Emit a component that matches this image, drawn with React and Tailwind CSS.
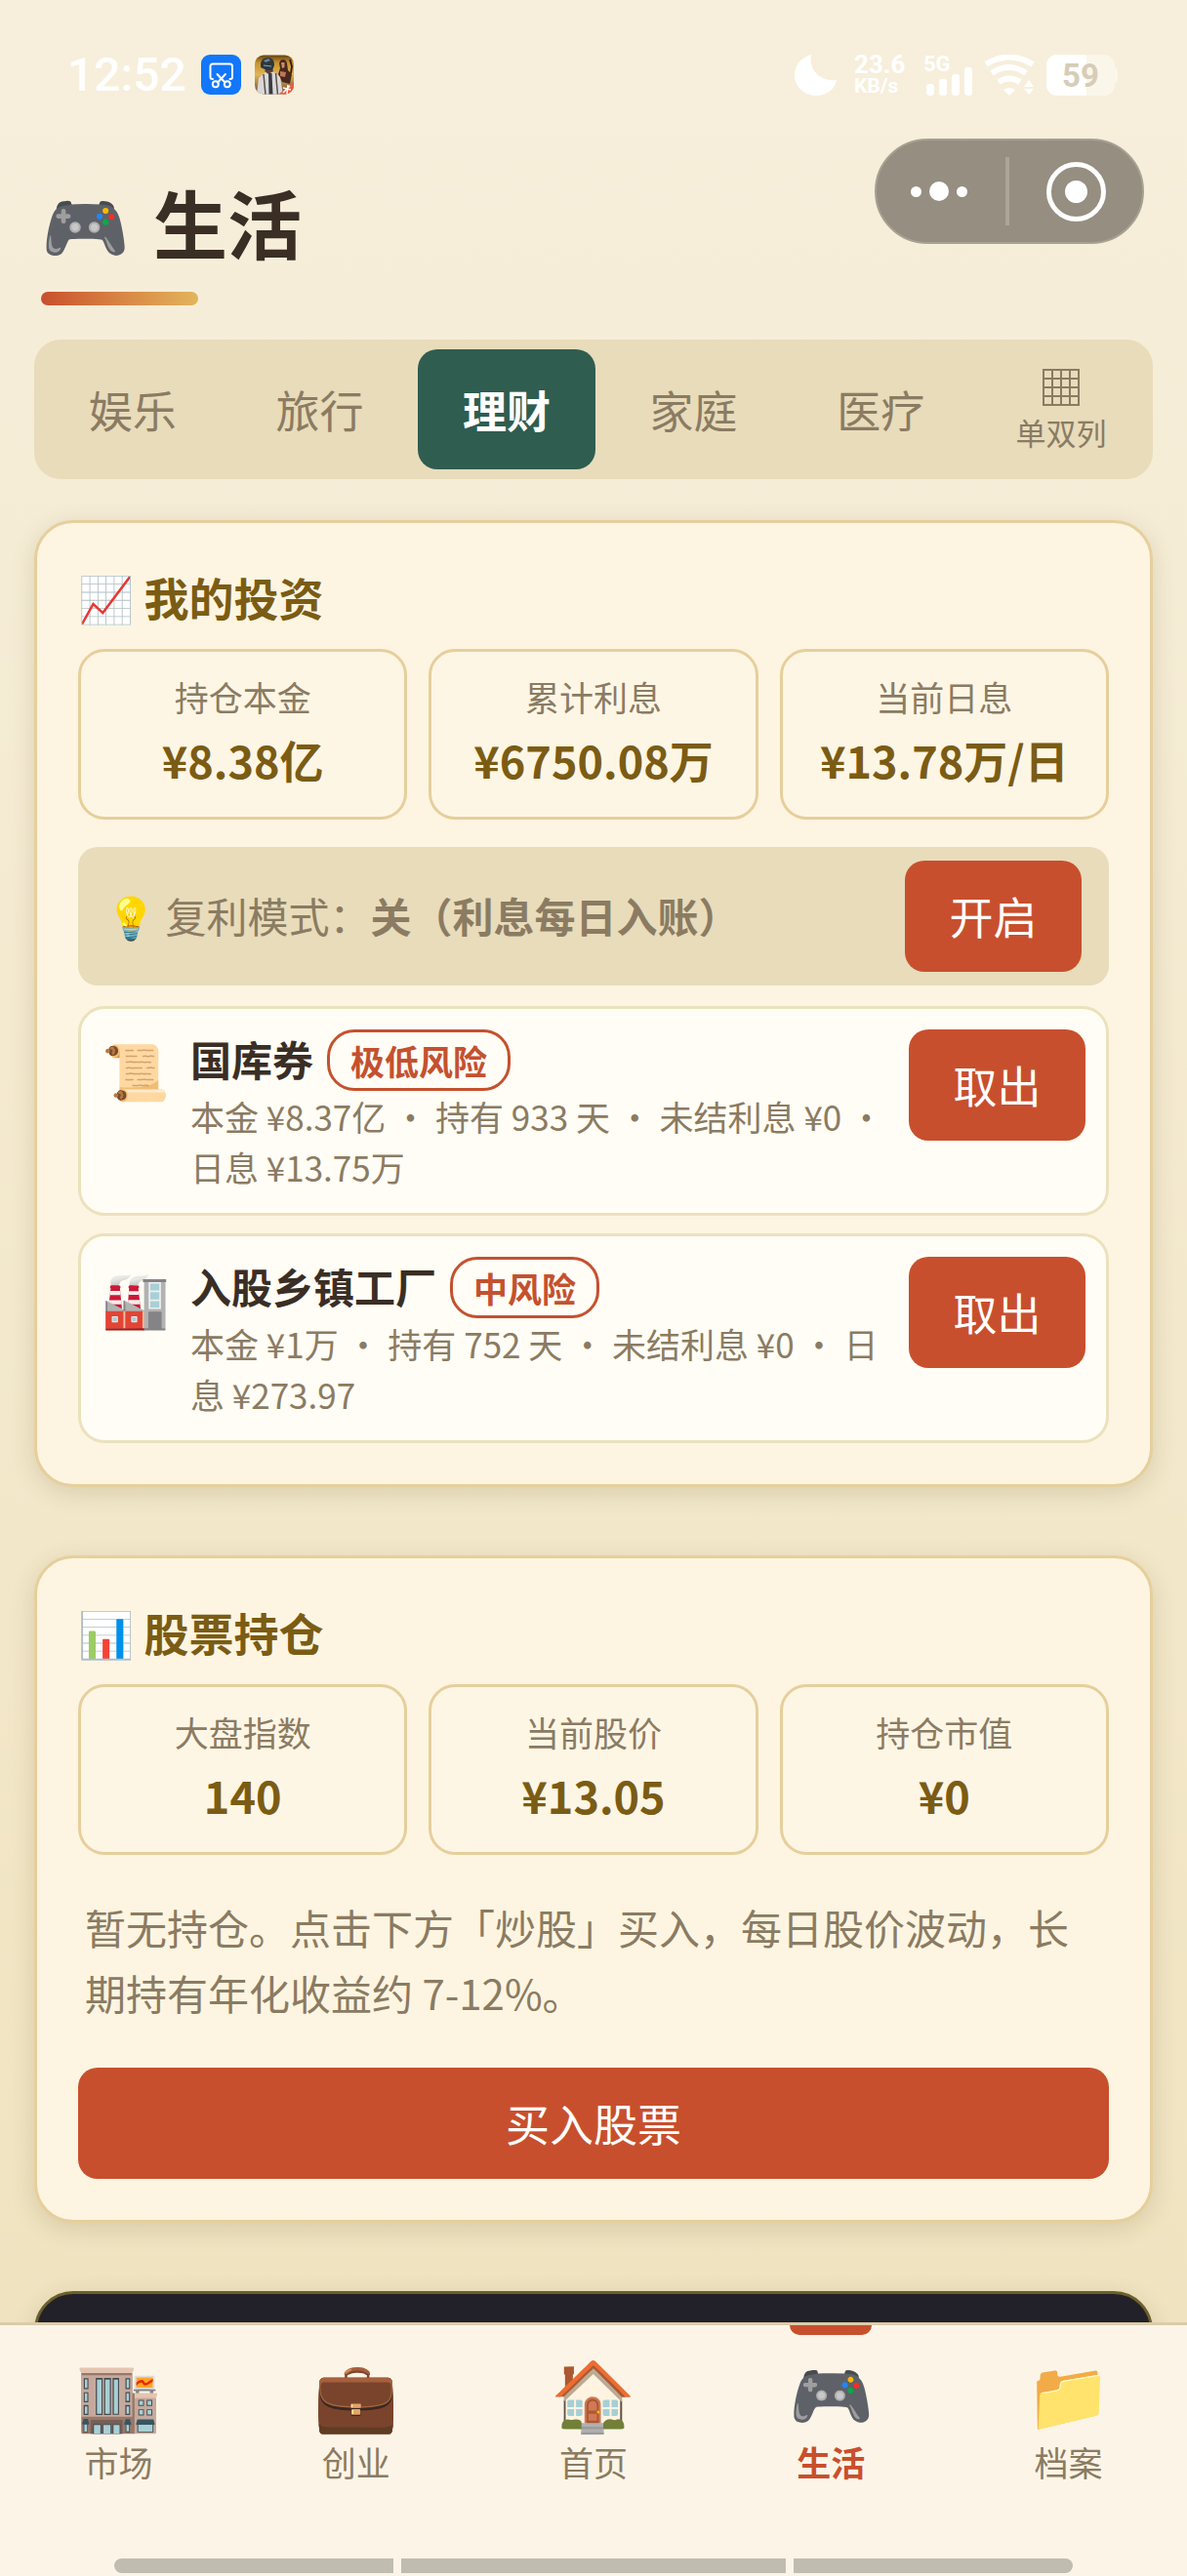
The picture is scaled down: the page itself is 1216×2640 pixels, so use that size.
const tabs = ['娱乐', '旅行', '理财', '家庭', '医疗'];

const investStats = [
  { label: '持仓本金', value: '¥8.38亿' },
  { label: '累计利息', value: '¥6750.08万' },
  { label: '当前日息', value: '¥13.78万/日' },
];

const stockStats = [
  { label: '大盘指数', value: '140' },
  { label: '当前股价', value: '¥13.05' },
  { label: '持仓市值', value: '¥0' },
];

const holdings = [
  {
    icon: '📜',
    name: '国库券',
    risk: '极低风险',
    meta: '本金 ¥8.37亿 · 持有 933 天 · 未结利息 ¥0 · 日息 ¥13.75万',
  },
  {
    icon: '🏭',
    name: '入股乡镇工厂',
    risk: '中风险',
    meta: '本金 ¥1万 · 持有 752 天 · 未结利息 ¥0 · 日息 ¥273.97',
  },
];

const navItems = [
  { icon: '🏬', label: '市场' },
  { icon: '💼', label: '创业' },
  { icon: '🏠', label: '首页' },
  { icon: '🎮', label: '生活', active: true },
  { icon: '📁', label: '档案' },
];

function ScissorsBadge() {
  return (
    <svg className="size-[41px]" viewBox="0 0 41 41" fill="none" aria-hidden>
      <rect width="41" height="41" rx="9" fill="#1277fb" />
      <g stroke="#fff" strokeWidth="2" strokeLinecap="round">
        <path d="M12 25h-.5a2 2 0 0 1-2-2V12a2.500 2.500 0 0 1 2.500-2.500h17.500A2.500 2.500 0 0 1 32 12v11a2 2 0 0 1-2 2h-.500" />
        <path d="M16.500 20l8 8.500M25 20l-8 8.500" />
        <circle cx="14.800" cy="30.300" r="3" />
        <circle cx="26.800" cy="30.300" r="3" />
      </g>
    </svg>
  );
}

function GameBadge() {
  return (
    <svg className="size-[41px]" viewBox="0 0 41 41" aria-hidden>
      <defs>
        <clipPath id="game-clip">
          <rect width="40" height="40" y="0.500" rx="9" />
        </clipPath>
        <linearGradient id="game-bg" x1="0" y1="0" x2="0" y2="1">
          <stop offset="0" stopColor="#5b3c14" />
          <stop offset="0.200" stopColor="#c8922c" />
          <stop offset="0.500" stopColor="#e0b457" />
          <stop offset="1" stopColor="#6a4a35" />
        </linearGradient>
      </defs>
      <g clipPath="url(#game-clip)">
        <rect width="41" height="41" fill="url(#game-bg)" />
        <path d="M25 9q1-4 4-4t4 4l1 7 4 4-2 10-8-2-4-8 2-6z" fill="#4a281d" />
        <path d="M27 8h3.500v5l-2.500 1z" fill="#c98e68" />
        <path d="M26 17l6 1-1 5-5-1z" fill="#b97a58" />
        <path d="M36 5l2 7-1 7" stroke="#2c1c17" strokeWidth="1.800" fill="none" />
        <path d="M2 41L4 24l7-6h9l6 5 3 18z" fill="#d9d8d8" />
        <path d="M9 20l2 21M21.500 19l2 22" stroke="#5a5049" strokeWidth="1.500" />
        <path d="M14 19h3.500l1 22h-4z" fill="#3a3a40" />
        <path d="M10 17l4 3 5-3-1-3h-6z" fill="#5c4334" />
        <path d="M6 9q1-6 7.500-6t6.500 8l-2 5h-6l-6-3z" fill="#2b3841" />
        <path d="M9 6l5-2 2 2-5 2z" fill="#71838c" />
        <path d="M9 11l8 1" stroke="#8fa2aa" strokeWidth="1" />
        <path d="M24 41l17-14v14z" fill="#ec5b3c" />
        <path d="M29 34l8 2M34 31l-1 9M29 39l7-7" stroke="#fff" strokeWidth="1.500" />
      </g>
    </svg>
  );
}

function StatusBar() {
  return (
    <div className="flex items-center justify-between pt-14 pr-[71px] pb-[45px] pl-[69px] text-white font-[Roboto,sans-serif]">
      <div className="flex h-[41px] items-center">
        <span className="mr-[15px] text-[48px] leading-[41px] font-medium">12:52</span>
        <span className="mr-[14px]">
          <ScissorsBadge />
        </span>
        <GameBadge />
      </div>
      <div className="flex h-[41px] items-center">
        <svg className="mr-[18px] h-[42px] w-[43px]" viewBox="0 0 43 42" fill="#fff" aria-hidden>
          <path d="M17 0C6 3 0 11 0 21c0 12 10 21 22 21 11 0 19-6 21-16C29 28 14 18 17 0z" />
        </svg>
        <span className="mr-[18px] w-[53px] font-bold">
          <span className="block text-[26px] leading-[22px]">23.6</span>
          <span className="block text-[21px] leading-[22px]">KB/s</span>
        </span>
        <svg className="mr-3 h-[42px] w-[50px] overflow-visible font-bold" viewBox="0 0 50 42" fill="#fff" aria-hidden>
          <text x="0" y="17" fontSize="22">5G</text>
          <rect x="3" y="30" width="8" height="12" rx="3" />
          <rect x="16" y="25" width="8" height="17" rx="3" />
          <rect x="29" y="20" width="8" height="22" rx="3" />
          <rect x="42" y="13" width="8" height="29" rx="3" />
        </svg>
        <svg className="mr-3 h-[42px] w-[52px]" viewBox="0 0 52 42" fill="none" stroke="#fff" aria-hidden>
          <path d="M2 10Q26-5 50 10" strokeWidth="6" />
          <path d="M8 19Q26 7 43 19" strokeWidth="6" />
          <path d="M15 28q11-7 22 0" strokeWidth="6" />
          <path d="M20 36q6-4 12 0l-6 6z" fill="#fff" stroke="none" />
          <path d="M46 26l5 7H41zM46 41l5-6H41z" fill="#fff" stroke="none" />
        </svg>
        <svg className="h-[42px] w-[73px] font-bold" viewBox="0 0 73 42" aria-hidden>
          <defs>
            <clipPath id="battery-clip">
              <rect width="70" height="42" rx="11" />
            </clipPath>
          </defs>
          <g clipPath="url(#battery-clip)">
            <rect width="73" height="42" fill="#fbf6ea" />
            <rect width="41" height="42" fill="#fff" />
          </g>
          <path d="M70 13q3 1 3 4v8q0 3-3 4z" fill="#fbf6ea" />
          <text x="35" y="33" fontSize="33" textAnchor="middle" fill="#d6cdb8">59</text>
        </svg>
      </div>
    </div>
  );
}

function Capsule() {
  return (
    <div className="flex h-[108px] w-[276px] items-center rounded-full border-2 border-[#a5a193] bg-[#958e81]">
      <button type="button" aria-label="更多" className="flex h-full w-[132px] items-center justify-center gap-2 pr-1">
        <span className="size-[11px] rounded-full bg-white" />
        <span className="size-5 rounded-full bg-white" />
        <span className="size-[11px] rounded-full bg-white" />
      </button>
      <span className="h-[70px] w-1 bg-[#aba698]" />
      <button type="button" aria-label="关闭" className="flex h-full flex-1 items-center justify-center">
        <span className="flex size-[61px] items-center justify-center rounded-full border-[5px] border-white">
          <span className="size-[23px] rounded-full bg-white" />
        </span>
      </button>
    </div>
  );
}

function Tabs() {
  return (
    <nav className="flex gap-[10px] rounded-[27px] bg-[#e8dcbb] p-[10px]">
      {tabs.map((tab) => (
        <button
          key={tab}
          type="button"
          className={
            tab === '理财'
              ? 'h-[123px] flex-1 rounded-[20px] bg-[#2f5d50] text-[45px] font-bold text-white'
              : 'h-[123px] flex-1 rounded-[20px] text-[45px] text-[#8b7b62]'
          }
        >
          {tab}
        </button>
      ))}
      <button
        type="button"
        className="flex w-[168px] flex-col items-center justify-center gap-1 pt-1 text-[31px] leading-[46px] text-[#8b7b62]"
      >
        <svg className="size-[38px]" viewBox="0 0 38 38" fill="none" stroke="#8b7b62" strokeWidth="2" aria-hidden>
          <path d="M1 1h36v36H1zM1 10h36M1 19h36M1 28h36M10 1v36M19 1v36M28 1v36" />
        </svg>
        单双列
      </button>
    </nav>
  );
}

function Card({ icon, title, children }) {
  return (
    <section className="rounded-[40px] border-3 border-[#e6cf9c] bg-[#fdf5e1] p-[42px] shadow-[0_6px_24px_rgba(92,70,20,0.16)]">
      <h2 className="mb-[21px] text-[46px] leading-[66px] font-bold text-[#7b5c14]">
        {icon} {title}
      </h2>
      {children}
    </section>
  );
}

function Stats({ items }) {
  return (
    <dl className="grid grid-cols-3 gap-[22px]">
      {items.map((item) => (
        <div
          key={item.label}
          className="rounded-[27px] border-3 border-[#e6cf9c] bg-[#fef6e5] pt-5 pb-[23px] text-center"
        >
          <dt className="text-[35px] leading-[52px] text-[#8b7b62]">{item.label}</dt>
          <dd className="mt-1 text-[45px] leading-[70px] font-bold text-[#7b5c14]">{item.value}</dd>
        </div>
      ))}
    </dl>
  );
}

function ActionButton({ children }) {
  return (
    <button
      type="button"
      className="h-[114px] w-[181px] shrink-0 rounded-[20px] bg-[#c84f2d] text-[45px] text-white"
    >
      {children}
    </button>
  );
}

function Holding({ icon, name, risk, meta }) {
  return (
    <li className="flex items-start gap-[21px] rounded-[27px] border-3 border-[#ece1bd] bg-[#fffdf5] p-[21px]">
      <span className="w-[70px] text-[56px] leading-[80px]">{icon}</span>
      <div className="min-w-0 flex-1">
        <div className="flex items-start gap-[14px]">
          <h3 className="text-[42px] leading-[60px] font-bold text-[#3a2e25]">{name}</h3>
          <span className="rounded-[28px] border-3 border-[#c4512f] px-[21px] text-[35px] leading-[57px] font-bold text-[#c4512f]">
            {risk}
          </span>
        </div>
        <p className="text-[35px] leading-[52px] text-[#8b7b62]">{meta}</p>
      </div>
      <ActionButton>取出</ActionButton>
    </li>
  );
}

function BottomNav() {
  return (
    <footer className="border-t-3 border-[#dccba8] bg-[#fcf5e7]">
      <nav className="grid grid-cols-5">
        {navItems.map((item) => (
          <a
            key={item.label}
            href="#"
            aria-current={item.active ? 'page' : undefined}
            className={
              item.active
                ? 'relative flex flex-col items-center gap-1 pt-6 font-bold text-[#c84f2d]'
                : 'relative flex flex-col items-center gap-1 pt-6 text-[#8b7b62]'
            }
          >
            {item.active && <span className="absolute top-0 h-[10px] w-[84px] rounded-b-[10px] bg-[#c84f2d]" />}
            <span className="text-[70px] leading-[86px]">{item.icon}</span>
            <span className="text-[35px] leading-[52px]">{item.label}</span>
          </a>
        ))}
      </nav>
      <div className="mt-[73px] mb-[3px] flex h-[15px] gap-2 px-[117px]">
        <span className="w-[286px] rounded-l-full bg-[#c0bdb0]" />
        <span className="flex-1 bg-[#c0bdb0]" />
        <span className="w-[286px] rounded-r-full bg-[#c0bdb0]" />
      </div>
    </footer>
  );
}

export default function App() {
  return (
    <div
      lang="zh-CN"
      className="flex h-dvh flex-col bg-linear-to-b from-[#f7efdc] to-[#efe2bd] font-['Noto_Sans_CJK_SC',sans-serif]"
    >
      <div className="min-h-0 flex-1 overflow-y-auto [scrollbar-width:none]">
        <StatusBar />
        <header className="flex items-start justify-between pr-11 pl-[42px]">
          <div className="pt-8">
            <h1 className="flex items-center gap-6 text-[76px] leading-[106px] font-bold text-[#3a2e25]">
              <span className="text-[73px]">🎮</span>
              生活
            </h1>
            <div className="mt-[19px] h-[14px] w-[161px] rounded-full bg-linear-to-r from-[#c84f2d] to-[#e2b55b]" />
          </div>
          <Capsule />
        </header>

        <main className="flex flex-col px-[35px] pt-[35px]">
          <Tabs />
          <div className="mt-[42px] flex flex-col gap-[70px]">
            <Card icon="📈" title="我的投资">
              <Stats items={investStats} />
              <div className="mt-7 mb-[21px] flex items-center justify-between rounded-[20px] bg-[#e8dcbb] py-[14px] pr-7 pl-7">
                <p className="pb-[3px] text-[42px] text-[#8b7b62]">
                  💡 复利模式：<strong>关（利息每日入账）</strong>
                </p>
                <ActionButton>开启</ActionButton>
              </div>
              <ul className="flex flex-col gap-[18px]">
                {holdings.map((holding) => (
                  <Holding key={holding.name} {...holding} />
                ))}
              </ul>
            </Card>

            <Card icon="📊" title="股票持仓">
              <Stats items={stockStats} />
              <p className="mt-10 mb-11 px-[7px] text-[42px] leading-[67px] text-[#8b7b62]">
                暂无持仓。点击下方「炒股」买入，每日股价波动，长期持有年化收益约 7-12%。
              </p>
              <button type="button" className="h-[114px] w-full rounded-[20px] bg-[#c84f2d] text-[45px] text-white">
                买入股票
              </button>
            </Card>

            <section className="h-80 rounded-[40px] border-3 border-[#6a602c] bg-[#22212a] shadow-[0_6px_24px_rgba(92,70,20,0.16)]" />
          </div>
        </main>
      </div>
      <BottomNav />
    </div>
  );
}
